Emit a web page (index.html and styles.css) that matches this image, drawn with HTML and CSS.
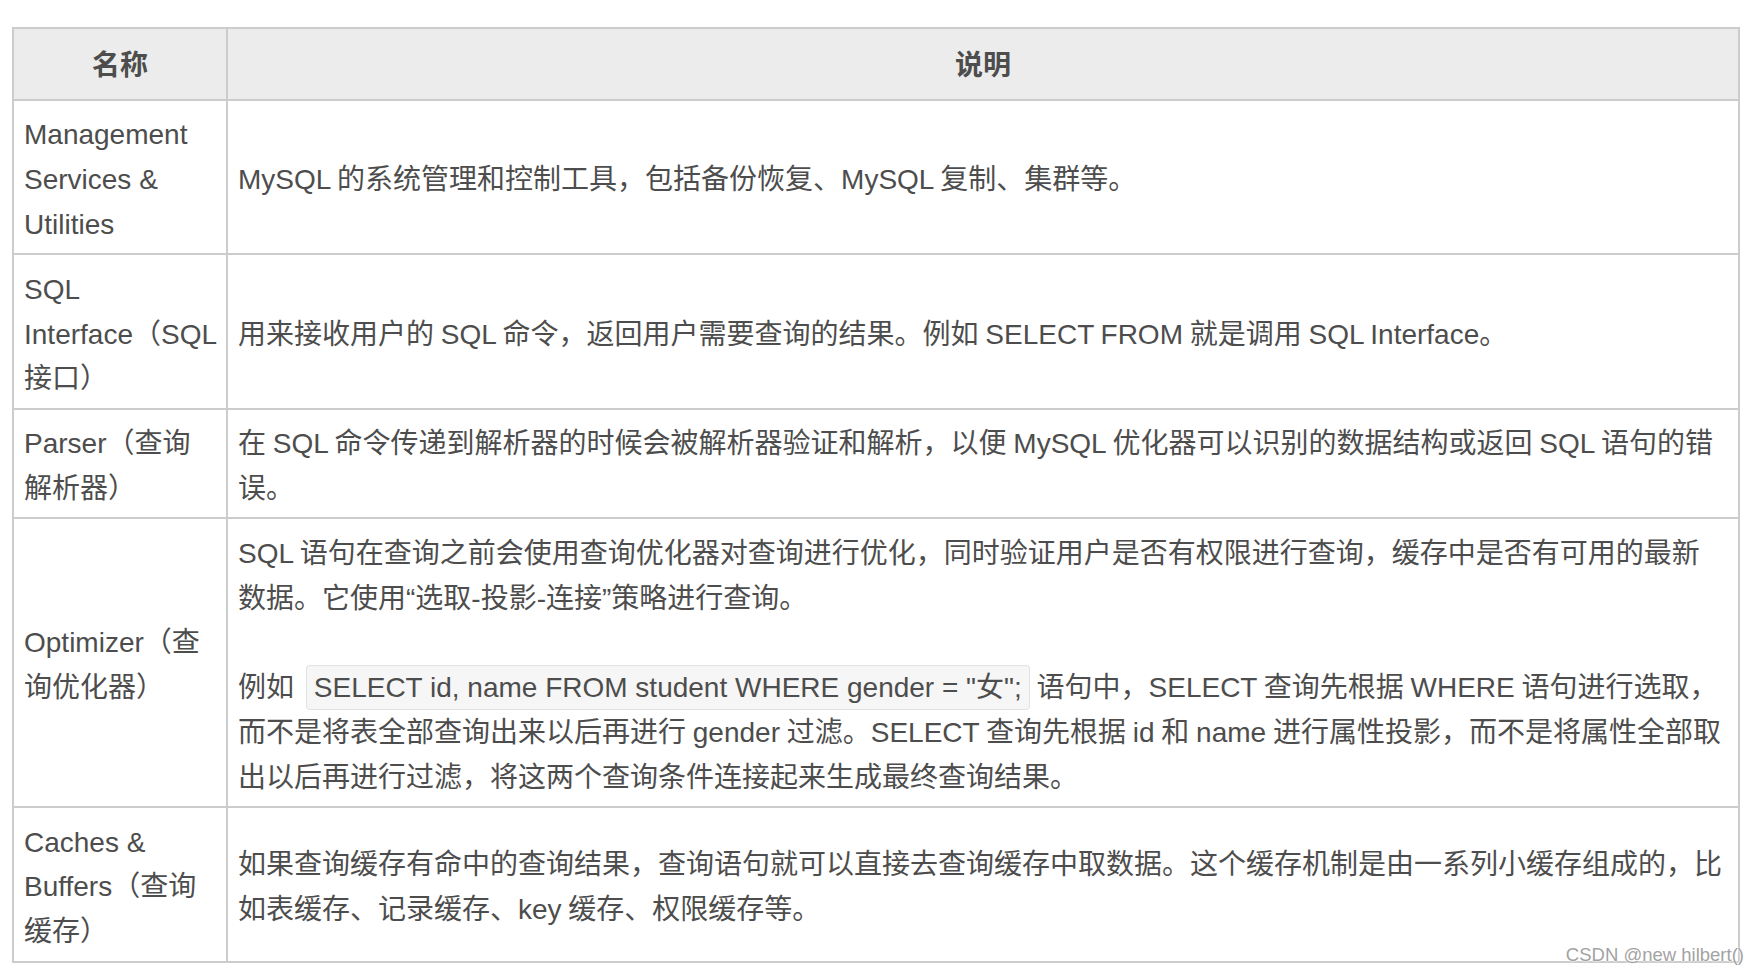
FILE: index.html
```html
<!DOCTYPE html>
<html lang="zh-CN">
<head>
<meta charset="utf-8">
<title>MySQL 逻辑架构</title>
<link rel="stylesheet" href="styles.css">
</head>
<body>
<div class="page">
  <table class="spec">
    <colgroup>
      <col class="col-name">
      <col class="col-desc">
    </colgroup>
    <thead>
      <tr><th>名称</th><th>说明</th></tr>
    </thead>
    <tbody>
      <tr>
        <td class="name">Management Services &amp; Utilities</td>
        <td>MySQL 的系统管理和控制工具，包括备份恢复、MySQL 复制、集群等。</td>
      </tr>
      <tr>
        <td class="name">SQL Interface&#8288;（SQL 接口）</td>
        <td>用来接收用户的 SQL 命令，返回用户需要查询的结果。例如 SELECT FROM 就是调用 SQL Interface。</td>
      </tr>
      <tr>
        <td class="name">Parser（查询解析器）</td>
        <td>在 SQL 命令传递到解析器的时候会被解析器验证和解析，以便 MySQL 优化器可以识别的数据结构或返回 SQL 语句的错误。</td>
      </tr>
      <tr>
        <td class="name">Optimizer（查询优化器）</td>
        <td>SQL 语句在查询之前会使用查询优化器对查询进行优化，同时验证用户是否有权限进行查询，缓存中是否有可用的最新数据。它使用“选取-投影-连接”策略进行查询。<br><br>例如 <code>SELECT id, name FROM student WHERE gender = "女";</code> 语句中，SELECT 查询先根据 WHERE 语句进行选取，而不是将表全部查询出来以后再进行 gender 过滤。SELECT 查询先根据 id 和 name 进行属性投影，而不是将属性全部取出以后再进行过滤，将这两个查询条件连接起来生成最终查询结果。</td>
      </tr>
      <tr>
        <td class="name">Caches &amp; Buffers（查询缓存）</td>
        <td>如果查询缓存有命中的查询结果，查询语句就可以直接去查询缓存中取数据。这个缓存机制是由一系列小缓存组成的，比如表缓存、记录缓存、key 缓存、权限缓存等。</td>
      </tr>
    </tbody>
  </table>
  <span class="watermark">CSDN @new hilbert()</span>
</div>
</body>
</html>
```
FILE: styles.css
```css
html, body {
  margin: 0;
  padding: 0;
  background: #ffffff;
}

.page {
  position: relative;
  width: 1756px;
  height: 974px;
  box-sizing: border-box;
  padding: 27px 0 0 12px;
  font-family: "Liberation Sans", "Noto Sans CJK SC", sans-serif;
  color: #4d4d4d;
  text-autospace: no-autospace;
  text-spacing-trim: space-all;
}

.spec {
  width: 1728px;
  table-layout: fixed;
  border-collapse: separate;
  border-spacing: 0;
  border-top: 2px solid #cccccc;
  border-left: 2px solid #cccccc;
  font-size: 28px;
  line-height: 44.8px;
}

.col-name {
  width: 214px;
}

.col-desc {
  width: 1512px;
}

.spec th,
.spec td {
  border-right: 2px solid #cccccc;
  border-bottom: 2px solid #cccccc;
  vertical-align: middle;
  text-align: left;
}

.spec th {
  background: #ececec;
  padding: 14.6px 10px 10.6px;
  text-align: center;
  font-weight: 700;
}

.spec td {
  padding: 12.5px 12px 5.5px 10px;
  word-spacing: -1px;
}

.spec td.name {
  padding-right: 10px;
  word-spacing: 0;
}

.spec code {
  font-family: "Liberation Sans", "Noto Sans CJK SC", sans-serif;
  font-size: 28px;
  word-spacing: 0;
  background: #f6f6f6;
  border: 1px solid #e2e2e2;
  border-radius: 4px;
  padding: 6px 7px;
  margin: 0 0 0 5px;
  color: #4d4d4d;
}

.watermark {
  position: absolute;
  right: 12px;
  top: 944px;
  font-family: "Liberation Sans", sans-serif;
  font-size: 18.5px;
  line-height: 21px;
  color: #a3a3a3;
  text-shadow: 0 0 2px #ffffff, 0 0 2px #ffffff;
}
```
